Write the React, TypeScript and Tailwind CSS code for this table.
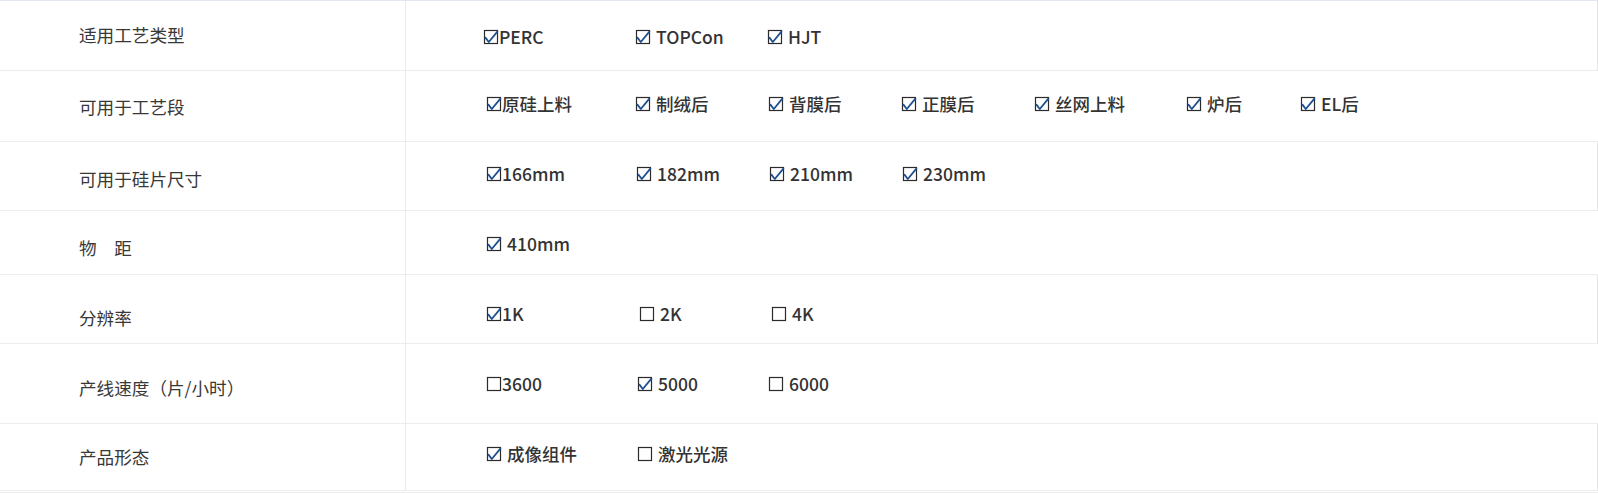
import React from "react";

type Opt = { t: string; c: boolean; sp: boolean; w?: string };
type Row = {
  label: string;
  h: string;
  lpt: string;
  opt: string;
  pl: string;
  rb: boolean;
  items: Opt[];
};

const rows: Row[] = [
  {
    label: "适用工艺类型",
    h: "h-[69px]",
    lpt: "pt-[22px]",
    opt: "pt-[24px]",
    pl: "pl-[77px]",
    rb: true,
    items: [
      { t: "PERC", c: true, sp: false, w: "w-[152px]" },
      { t: "TOPCon", c: true, sp: true, w: "w-[132px]" },
      { t: "HJT", c: true, sp: true },
    ],
  },
  {
    label: "可用于工艺段",
    h: "h-[70px]",
    lpt: "pt-[24px]",
    opt: "pt-[21px]",
    pl: "pl-[80px]",
    rb: false,
    items: [
      { t: "原硅上料", c: true, sp: false, w: "w-[149px]" },
      { t: "制绒后", c: true, sp: true, w: "w-[133px]" },
      { t: "背膜后", c: true, sp: true, w: "w-[133px]" },
      { t: "正膜后", c: true, sp: true, w: "w-[133px]" },
      { t: "丝网上料", c: true, sp: true, w: "w-[152px]" },
      { t: "炉后", c: true, sp: true, w: "w-[114px]" },
      { t: "EL后", c: true, sp: true },
    ],
  },
  {
    label: "可用于硅片尺寸",
    h: "h-[68px]",
    lpt: "pt-[25px]",
    opt: "pt-[20px]",
    pl: "pl-[80px]",
    rb: true,
    items: [
      { t: "166mm", c: true, sp: false, w: "w-[150px]" },
      { t: "182mm", c: true, sp: true, w: "w-[133px]" },
      { t: "210mm", c: true, sp: true, w: "w-[133px]" },
      { t: "230mm", c: true, sp: true },
    ],
  },
  {
    label: "物\u3000距",
    h: "h-[63px]",
    lpt: "pt-[25px]",
    opt: "pt-[21px]",
    pl: "pl-[80px]",
    rb: false,
    items: [{ t: "410mm", c: true, sp: true }],
  },
  {
    label: "分辨率",
    h: "h-[68px]",
    lpt: "pt-[31px]",
    opt: "pt-[27px]",
    pl: "pl-[80px]",
    rb: true,
    items: [
      { t: "1K", c: true, sp: false, w: "w-[153px]" },
      { t: "2K", c: false, sp: true, w: "w-[132px]" },
      { t: "4K", c: false, sp: true },
    ],
  },
  {
    label: "产线速度（片/小时）",
    h: "h-[79px]",
    lpt: "pt-[32px]",
    opt: "pt-[28px]",
    pl: "pl-[80px]",
    rb: false,
    items: [
      { t: "3600", c: false, sp: false, w: "w-[151px]" },
      { t: "5000", c: true, sp: true, w: "w-[131px]" },
      { t: "6000", c: false, sp: true },
    ],
  },
  {
    label: "产品形态",
    h: "h-[66px]",
    lpt: "pt-[21px]",
    opt: "pt-[18px]",
    pl: "pl-[80px]",
    rb: true,
    items: [
      { t: "成像组件", c: true, sp: true, w: "w-[151px]" },
      { t: "激光光源", c: false, sp: true },
    ],
  },
];

function Box({ checked }: { checked: boolean }) {
  return (
    <svg width="16" height="16" viewBox="0 0 16 16" className="shrink-0 overflow-visible">
      <rect x="1.5" y="1.5" width="13" height="13" fill="none" stroke="#2b2b2b" strokeWidth="1.2" />
      {checked && (
        <path
          d="M2.4 8.6 L5.8 13 L14.4 2.6"
          fill="none"
          stroke="#1d4f8e"
          strokeWidth="1.8"
          strokeLinecap="round"
          strokeLinejoin="round"
        />
      )}
    </svg>
  );
}

export default function App() {
  return (
    <div
      className="w-[1598px] bg-white border-t border-[#e2e7ef] border-b border-b-[#ececec] pb-px"
      style={{ fontFamily: '"Noto Sans CJK SC", "Noto Sans", sans-serif' }}
    >
      {rows.map((r, i) => (
        <div
          key={i}
          className={`flex ${r.h} box-content border-b border-[#ececec] ${r.rb ? "border-r border-r-[#e6e6e6]" : ""}`}
        >
          <div className={`w-[406px] shrink-0 border-r border-[#ececec] pl-[79px] ${r.lpt}`}>
            <div className="h-6 leading-6 text-[17.6px] text-[#383838] whitespace-nowrap">{r.label}</div>
          </div>
          <div className={`flex-1 flex items-start ${r.pl} ${r.opt}`}>
            {r.items.map((it, j) => (
              <div key={j} className={`flex items-center h-6 shrink-0 ${it.w ?? ""}`}>
                <Box checked={it.c} />
                <span
                  className={`${it.sp ? "ml-[5px]" : "ml-0"} leading-6 text-[17.5px] font-medium text-[#333] whitespace-nowrap`}
                >
                  {it.t}
                </span>
              </div>
            ))}
          </div>
        </div>
      ))}
    </div>
  );
}
